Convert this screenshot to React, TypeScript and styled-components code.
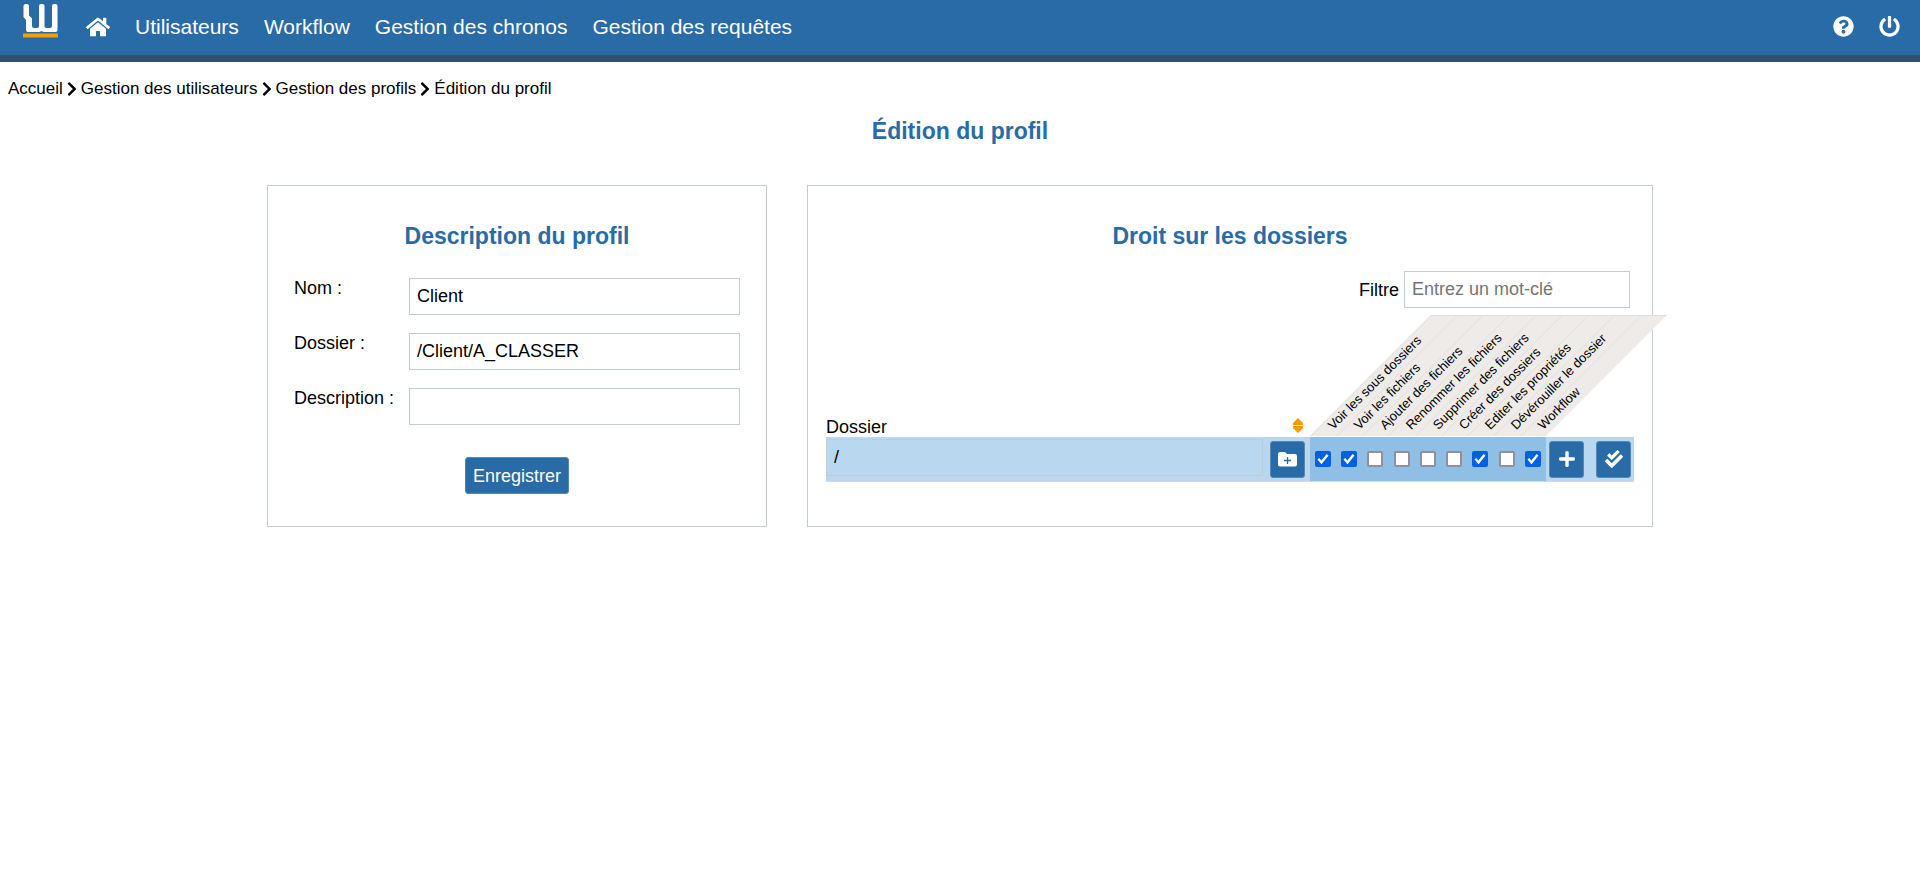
import React from 'react';
import styled, { createGlobalStyle } from 'styled-components';
import { FaCheckDouble, FaChevronRight, FaHome, FaPlus, FaPowerOff, FaQuestionCircle } from 'react-icons/fa';

const GlobalStyle = createGlobalStyle`
  * { box-sizing: border-box; }
  body {
    margin: 0;
    background: #fff;
    color: #000;
    font: 18px/20px "Liberation Sans", Arial, sans-serif;
  }
  button, input { font: inherit; color: inherit; }
  a { color: inherit; text-decoration: none; }
`;

const TopBar = styled.header`
  display: flex;
  justify-content: space-between;
  height: 62px;
  padding: 0 20px 0 23px;
  background: #296ba6;
  border-bottom: 7px solid #30506b;
  color: #fff;
`;

const MainNav = styled.nav`
  display: flex;
  align-items: center;
  gap: 25px;
  font-size: 21px;
  line-height: 24px;
  white-space: nowrap;
`;

const NavLink = styled.a`
  display: flex;
  padding-bottom: 2px;
`;

const LogoLink = styled.a`
  display: flex;
  align-self: flex-start;
  padding: 4px 2px 0 0;
`;

const Breadcrumb = styled.nav`
  display: flex;
  align-items: center;
  gap: 1px;
  padding: 17px 8px 0;
  font-size: 17px;
`;

const Title = styled.h1`
  margin: 19px 0 41px;
  color: #296ba6;
  font-size: 23px;
  line-height: 26px;
  text-align: center;
`;

const Panels = styled.main`
  display: flex;
  justify-content: center;
  gap: 40px;
  padding: 0 20px;
`;

const Panel = styled.section<{ $width: number; $side: number }>`
  flex: 0 1 ${(p) => p.$width}px;
  min-width: 0;
  padding: 37px ${(p) => p.$side}px 32px;
  border: 1px solid #c3ccd5;
`;

const PanelTitle = styled.h2`
  margin: 0;
  color: #296ba6;
  font-size: 23px;
  line-height: 26px;
  text-align: center;
`;

const ProfileForm = styled.form`
  display: flex;
  flex-direction: column;
  gap: 18px;
  margin-top: 29px;
`;

const Field = styled.div`
  display: flex;
  align-items: flex-start;
`;

const FieldLabel = styled.label`
  flex: 0 0 115px;
`;

const TextInput = styled.input`
  display: block;
  flex: 1;
  min-width: 0;
  width: 100%;
  height: 37px;
  padding: 0 7px;
  border: 1px solid #c3ccd5;
  background: transparent;
  &::placeholder { color: #757575; opacity: 1; }
`;

const Button = styled.button`
  height: 37px;
  padding: 0 7px;
  border: 1px solid #5788b3;
  border-radius: 3px;
  background: #296ba6;
  color: #fff;
`;

const SaveButton = styled(Button)`
  align-self: center;
  margin-top: 14px;
`;

const IconButton = styled(Button)`
  display: flex;
  align-items: center;
  justify-content: center;
  width: 35px;
  padding: 0;
`;

const FilterRow = styled.div`
  display: flex;
  align-items: center;
  justify-content: flex-end;
  gap: 5px;
  margin: 22px 4px 7px 0;
`;

const FilterBox = styled.div`
  flex: 0 1 226px;
`;

const RightsTable = styled.table`
  width: 100%;
  table-layout: fixed;
  border-collapse: separate;
  border-spacing: 0;
  th { padding: 0; font-weight: normal; text-align: left; vertical-align: bottom; }
`;

const Col = styled.col<{ $width: number }>`
  width: ${(p) => p.$width}px;
`;

const Cell = styled.td<{ $right?: boolean; $indent?: number }>`
  height: 45px;
  padding: 0 0 0 ${(p) => p.$indent ?? 0}px;
  border-bottom: 1px solid #d3d9de;
  background: ${(p) => (p.$right ? '#90bfe6' : '#b9d7ef')};
`;

const NameCell = styled(Cell)`
  padding-top: 2px;
  vertical-align: top;
`;

const PathInput = styled(TextInput)`
  border-color: #c3ccd5;
`;

const SortButton = styled.button`
  display: flex;
  margin: 0 6px 4px auto;
  padding: 0;
  border: 0;
  background: none;
`;

const Slant = styled.div`
  display: flex;
  align-items: flex-end;
  height: 121px;
  margin-bottom: 1px;
  padding: 0 0 3px 22px;
  border: solid #dddddd;
  border-width: 1px 0 0 1px;
  background: #eeebe9;
  transform: skewX(-45deg);
  transform-origin: left bottom;
`;

const SlantText = styled.span`
  flex: none;
  font-size: 13px;
  line-height: 16px;
  white-space: nowrap;
  transform: skewX(45deg) rotate(-45deg);
  transform-origin: left bottom;
`;

const Check = styled.input`
  display: grid;
  place-content: center;
  appearance: none;
  width: 16px;
  height: 16px;
  margin: 0 auto;
  border: 2px solid #8f8f9d;
  border-radius: 2px;
  background: #fff;
  &:checked { border-color: #0061e0; background: #0061e0; }
  &:checked::before {
    content: "";
    width: 12px;
    height: 12px;
    background: #fff;
    clip-path: polygon(4% 54%, 18% 42%, 36% 62%, 80% 8%, 96% 20%, 38% 94%);
  }
`;

const RIGHTS: [string, boolean][] = [
  ['Voir les sous dossiers', true],
  ['Voir les fichiers', true],
  ['Ajouter des fichiers', false],
  ['Renommer les fichiers', false],
  ['Supprimer des fichiers', false],
  ['Créer des dossiers', false],
  ['Editer les propriétés', true],
  ['Dévérouiller le dossier', false],
  ['Workflow', true],
];

const NAV = ['Utilisateurs', 'Workflow', 'Gestion des chronos', 'Gestion des requêtes'];
const TRAIL = ['Accueil', 'Gestion des utilisateurs', 'Gestion des profils'];
const FIELDS = [
  { id: 'nom', label: 'Nom :', value: 'Client' },
  { id: 'dossier', label: 'Dossier :', value: '/Client/A_CLASSER' },
  { id: 'description', label: 'Description :', value: '' },
];

const Logo = () => (
  <svg width="36" height="34" viewBox="0 0 36 34" aria-hidden="true">
    <path
      d="M.5 2q0-2 2-2h1.500q2 0 2 2v9.500l3 3V22q0 2 2 2h3q2 0 2-2V2q0-2 2-2h1.500q2 0 2 2v20q0 2 2 2h3.500q2 0 2-2V2q0-2 2-2h1.500q2 0 2 2v24q0 2-2 2H20.500L18.500 27l-2 1H5q-2 0-2-2V16L.5 13z"
      fill="#fff"
    />
    <path d="M0 29.500h35v4H0z" fill="#ff9900" />
  </svg>
);

const SortIcon = () => (
  <svg width="12" height="15" viewBox="0 0 12 15" aria-hidden="true">
    <path d="M6 0l5 5v2H1V5zM1 8h10v2l-5 5-5-5z" fill="#ff9900" />
  </svg>
);

const FolderAddIcon = () => (
  <svg width="19" height="15" viewBox="0 0 19 15" aria-hidden="true">
    <path d="M2 0h5l2 2h8q2 0 2 2v8.500q0 2-2 2H2q-2 0-2-2V2q0-2 2-2z" fill="#fff" />
    <path d="M9.500 5v7M6 8.500h7" stroke="#296ba6" strokeWidth="1.300" />
  </svg>
);

export default function App() {
  return (
    <>
      <GlobalStyle />
      <TopBar>
        <MainNav>
          <LogoLink href="#" aria-label="Logo"><Logo /></LogoLink>
          <NavLink href="#" aria-label="Accueil"><FaHome size={24} /></NavLink>
          {NAV.map((n) => <NavLink href="#" key={n}>{n}</NavLink>)}
        </MainNav>
        <MainNav>
          <NavLink href="#" aria-label="Aide"><FaQuestionCircle size={21} /></NavLink>
          <NavLink href="#" aria-label="Déconnexion"><FaPowerOff size={21} /></NavLink>
        </MainNav>
      </TopBar>
      <Breadcrumb>
        {TRAIL.map((t) => (
          <React.Fragment key={t}>
            <a href="#">{t}</a>
            <FaChevronRight size={16} />
          </React.Fragment>
        ))}
        <span>Édition du profil</span>
      </Breadcrumb>
      <Title>Édition du profil</Title>
      <Panels>
        <Panel $width={500} $side={26}>
          <PanelTitle>Description du profil</PanelTitle>
          <ProfileForm>
            {FIELDS.map((f) => (
              <Field key={f.id}>
                <FieldLabel htmlFor={f.id}>{f.label}</FieldLabel>
                <TextInput id={f.id} defaultValue={f.value} />
              </Field>
            ))}
            <SaveButton type="button">Enregistrer</SaveButton>
          </ProfileForm>
        </Panel>
        <Panel $width={846} $side={18}>
          <PanelTitle>Droit sur les dossiers</PanelTitle>
          <FilterRow>
            <label htmlFor="filtre">Filtre</label>
            <FilterBox><TextInput id="filtre" placeholder="Entrez un mot-clé" /></FilterBox>
          </FilterRow>
          <RightsTable>
            <colgroup>
              <col />
              <Col $width={47} />
              {RIGHTS.map(([r], i) => <Col $width={i % 4 === 3 ? 27 : 26} key={r} />)}
              <Col $width={47} />
              <Col $width={41} />
            </colgroup>
            <thead>
              <tr>
                <th>Dossier</th>
                <th><SortButton type="button" aria-label="Trier"><SortIcon /></SortButton></th>
                {RIGHTS.map(([r]) => (
                  <th key={r}><Slant><SlantText>{r}</SlantText></Slant></th>
                ))}
                <th />
                <th />
              </tr>
            </thead>
            <tbody>
              <tr>
                <NameCell><PathInput aria-label="Dossier" defaultValue="/" /></NameCell>
                <Cell $indent={7}><IconButton type="button" aria-label="Ajouter un dossier"><FolderAddIcon /></IconButton></Cell>
                {RIGHTS.map(([r, on]) => (
                  <Cell $right key={r}><Check type="checkbox" aria-label={r} defaultChecked={on} /></Cell>
                ))}
                <Cell $indent={3}><IconButton type="button" aria-label="Ajouter"><FaPlus size={18} /></IconButton></Cell>
                <Cell $indent={3}><IconButton type="button" aria-label="Tout cocher"><FaCheckDouble size={18} /></IconButton></Cell>
              </tr>
            </tbody>
          </RightsTable>
        </Panel>
      </Panels>
    </>
  );
}
